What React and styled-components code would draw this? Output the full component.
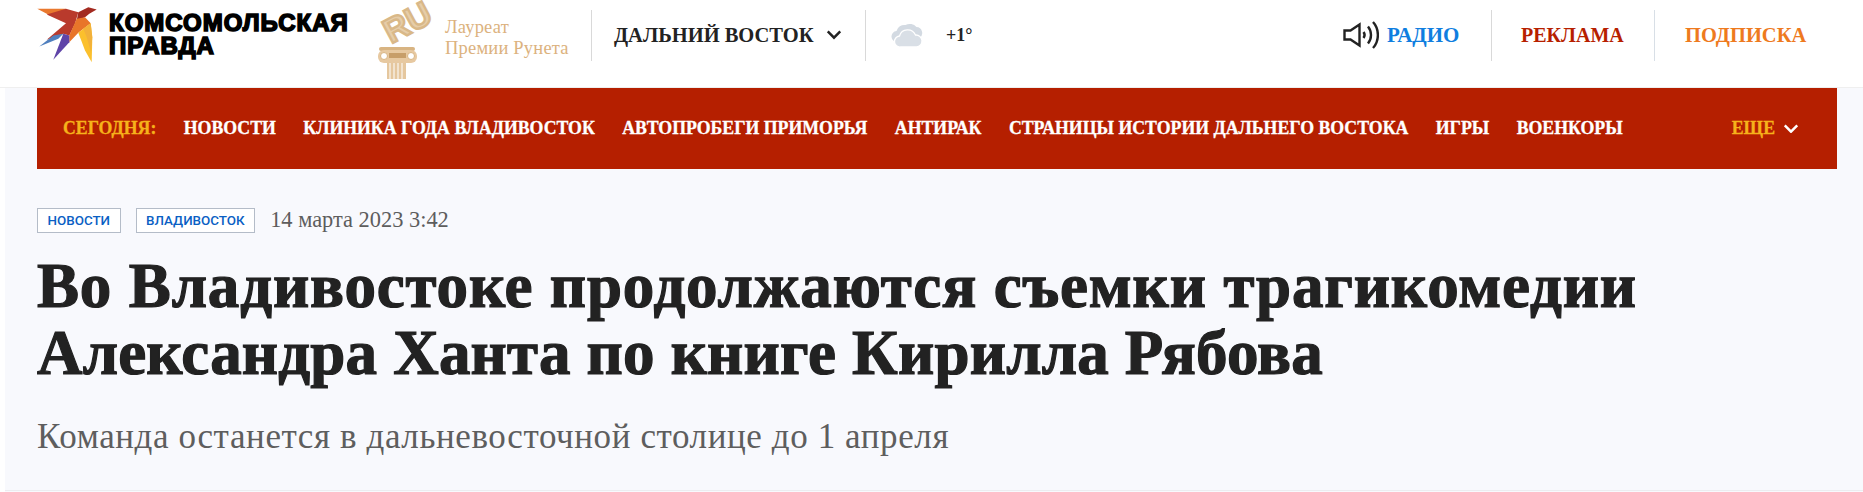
import styled, { createGlobalStyle } from "styled-components";

const navItems = [
  "Новости",
  "Клиника года Владивосток",
  "Автопробеги Приморья",
  "Антирак",
  "Страницы истории Дальнего Востока",
  "Игры",
  "Военкоры",
];

const serif = `"Liberation Serif", "DejaVu Serif", serif`;

const Global = createGlobalStyle`
  html, body {
    margin: 0;
    padding: 0;
    background: #fff;
  }
  * { box-sizing: border-box; }
`;

const Page = styled.div`
  width: 1863px;
  height: 492px;
  overflow: hidden;
  font-family: ${serif};
`;

const Header = styled.header`
  display: flex;
  align-items: flex-start;
  height: 88px;
  padding-left: 37px;
  background: #fff;
  border-bottom: 1px solid #efefef;
`;

const Brand = styled.a`
  flex: none;
  display: flex;
  align-items: flex-start;
  width: 340px;
  padding-top: 7px;
`;

const BrandName = styled.div`
  margin: 5px 0 0 12px;
  font-family: "Liberation Sans", sans-serif;
  font-weight: 700;
  font-size: 24px;
  line-height: 22.5px;
  letter-spacing: 1px;
  color: #000;
  -webkit-text-stroke: 1.6px #000;
  text-transform: uppercase;
  white-space: nowrap;
`;

const Award = styled.div`
  flex: none;
  display: flex;
  align-items: flex-start;
  width: 214px;
`;

const AwardText = styled.div`
  margin: 17px 0 0 12px;
  font-size: 18.5px;
  line-height: 21px;
  letter-spacing: 0.2px;
  color: #dcb27e;
  white-space: nowrap;
`;

const Divider = styled.span`
  flex: none;
  width: 1px;
  height: 51px;
  margin-top: 10px;
  background: ${(p) => p.$color || "#d9d9d9"};
`;

const Region = styled.div`
  flex: none;
  display: flex;
  align-items: center;
  gap: 12px;
  width: 273px;
  height: 70px;
  padding-left: 22px;
  font-size: 20.5px;
  font-weight: 700;
  color: #222;
  text-transform: uppercase;
  white-space: nowrap;
`;

const Weather = styled.div`
  flex: none;
  display: flex;
  align-items: center;
  gap: 22px;
  width: 477px;
  height: 70px;
  padding-left: 25px;
  font-size: 18px;
  font-weight: 700;
  color: #222;
`;

const Radio = styled.div`
  flex: none;
  display: flex;
  align-items: center;
  gap: 8px;
  width: 148px;
  height: 70px;
`;

const HeadLink = styled.a`
  flex: none;
  display: flex;
  align-items: center;
  height: 70px;
  padding-left: ${(p) => p.$pad || 0}px;
  width: ${(p) => p.$w || "auto"};
  font-size: ${(p) => p.$size || 20.5}px;
  font-weight: 700;
  color: ${(p) => p.$color};
  text-transform: uppercase;
  white-space: nowrap;
`;

const Content = styled.div`
  height: 404px;
  margin-left: 5px;
  background: #f8f9fd;
`;

const Nav = styled.nav`
  display: flex;
  align-items: center;
  justify-content: space-between;
  width: 1800px;
  height: 81px;
  margin-left: 32px;
  padding: 0 38px 0 26px;
  background: #b51f00;
`;

const NavList = styled.div`
  display: flex;
  align-items: center;
  gap: 27.4px;
`;

const NavLink = styled.a`
  font-size: 17.8px;
  font-weight: 700;
  color: ${(p) => (p.$accent ? "#f6b21b" : "#fff")};
  -webkit-text-stroke: 0.3px currentColor;
  text-transform: uppercase;
  white-space: nowrap;
`;

const More = styled.div`
  display: flex;
  align-items: center;
  gap: 8px;
`;

const Article = styled.main`
  height: 322px;
  padding: 38px 0 0 32px;
  border-bottom: 1px solid #ececf0;
`;

const Meta = styled.div`
  display: flex;
  align-items: center;
  height: 26px;
`;

const Tag = styled.a`
  display: flex;
  align-items: center;
  height: 25px;
  margin-right: 15px;
  padding: 0 9.5px;
  border: 1px solid #b4bcc8;
  background: #fff;
  font-family: Roboto, sans-serif;
  font-size: 13.4px;
  font-weight: 500;
  color: #0a5fc4;
  text-transform: uppercase;
`;

const DateText = styled.span`
  font-size: 22.4px;
  color: #5d5d5d;
`;

const Title = styled.h1`
  margin: 20px 0 0;
  font-size: 63px;
  line-height: 67px;
  font-weight: 700;
  color: #222;
  -webkit-text-stroke: 1.2px #222;
  white-space: nowrap;
`;

const TitleLine = styled.span`
  display: block;
  letter-spacing: ${(p) => p.$spacing}px;
`;

const Lead = styled.p`
  margin: 30px 0 0;
  font-size: 35px;
  line-height: 40px;
  letter-spacing: 0.6px;
  color: #5e5e5e;
  white-space: nowrap;
`;

const Bird = () => (
  <svg width="60" height="56" viewBox="0 -0.5 60 56">
    <polygon points="0.3,1.3 29,1.3 23,6.3 13,8" fill="#e9782e" />
    <polygon points="9.7,7 29,1.3 41.3,4.7 38,16.3 32.3,28 26.3,26.3 9.7,32.3 29,15.7" fill="#b93a2c" />
    <polygon points="41.3,4.7 51.3,-0.3 59.7,2 52.3,6.3 48,9.7 39.7,13" fill="#a32a20" />
    <polygon points="39.7,11.3 48,9.7 53.7,15.7 41.3,25.3 32.3,34.7 32.3,28" fill="#e8752a" />
    <polygon points="2.3,39 16.3,28 26.3,26.3 21.3,31.3" fill="#4f7fbe" />
    <polygon points="16.3,52.3 26.3,26.3 32.3,28 32.3,34.7" fill="#5f44a8" />
    <polygon points="41.3,25.3 53.7,15.7 55.3,29.7 54.7,54.7 48,43" fill="#fbc02d" />
    <polygon points="46.3,21.3 53.7,15.7 55.3,29.7 54,44.7 49.7,29.7" fill="#f2b13a" />
  </svg>
);

const Column = () => (
  <svg width="56" height="80" viewBox="0 0 56 80">
    <text
      x="14"
      y="44"
      transform="rotate(-28 14 44)"
      fontFamily="Liberation Sans, sans-serif"
      fontWeight="700"
      fontSize="34"
      fill="#e6cda8"
      stroke="#d9b888"
      strokeWidth="2.4"
    >
      RU
    </text>
    <rect x="2" y="47" width="36" height="4" rx="2" fill="#d8b482" />
    <rect x="1" y="50" width="39" height="13" rx="6" fill="#e7c9a1" />
    <circle cx="7" cy="56" r="3.5" fill="#fff" stroke="#d8b482" />
    <circle cx="34" cy="56" r="3.5" fill="#fff" stroke="#d8b482" />
    <rect x="12" y="53" width="17" height="5" fill="#c79e69" />
    <rect x="10" y="63" width="19" height="16" fill="#e5c79e" />
    <path d="M13 63v16M17 63v16M21 63v16M25 63v16" stroke="#fff" strokeWidth="1" />
  </svg>
);

const Chevron = ({ color, size = 16 }) => (
  <svg width={size} height={size * 0.6} viewBox="0 0 16 10">
    <path d="M1.5 1.5 8 8l6.5-6.5" fill="none" stroke={color} strokeWidth="2.6" />
  </svg>
);

const Cloud = () => (
  <svg width="33" height="26" viewBox="0 0 32 26">
    <path fill="#d3dae2" d="M6 20a5.5 5.5 0 0 1-1-11 8 8 0 0 1 9-6 9 9 0 0 1 11 2 6 6 0 0 1 3 11 5 5 0 0 1-4 4z" />
    <path fill="#d9dfe6" stroke="#fff" strokeWidth="1.3" d="M9 25a5.5 5.5 0 0 1-1-11 8.5 8.5 0 0 1 16-1 6 6 0 0 1 1 12z" />
  </svg>
);

const Speaker = () => (
  <svg width="36" height="28" viewBox="0 0 36 28" fill="none" stroke="#222" strokeWidth="2.4">
    <path d="M1.5 9.5h6l9-6v21l-9-6h-6z" />
    <path d="M20.5 11c1.5 2 1.5 4 0 6" />
    <path d="M25 5.500c4 5 4 12 0 17" />
    <path d="M30 1c6.500 7 6.500 19 0 26" />
  </svg>
);

export default function App() {
  return (
    <Page>
      <Global />
      <Header>
        <Brand>
          <Bird />
          <BrandName>
            Комсомольская
            <br />
            правда
          </BrandName>
        </Brand>
        <Award>
          <Column />
          <AwardText>
            Лауреат
            <br />
            Премии Рунета
          </AwardText>
        </Award>
        <Divider />
        <Region>
          Дальний Восток
          <Chevron color="#222" />
        </Region>
        <Divider />
        <Weather>
          <Cloud />
          +1°
        </Weather>
        <Radio>
          <Speaker />
          <HeadLink $color="#0f7ee0" $size={21}>
            Радио
          </HeadLink>
        </Radio>
        <Divider />
        <HeadLink $color="#b71f00" $pad={29} $size={20} $w="162px">
          Реклама
        </HeadLink>
        <Divider $color="#d8dfe6" />
        <HeadLink $color="#ee7a1e" $pad={30}>
          Подписка
        </HeadLink>
      </Header>
      <Content>
        <Nav>
          <NavList>
            <NavLink $accent>Сегодня:</NavLink>
            {navItems.map((item) => (
              <NavLink key={item}>{item}</NavLink>
            ))}
          </NavList>
          <More>
            <NavLink $accent>Еще</NavLink>
            <Chevron color="#fff" />
          </More>
        </Nav>
        <Article>
          <Meta>
            <Tag>Новости</Tag>
            <Tag>Владивосток</Tag>
            <DateText>14 марта 2023 3:42</DateText>
          </Meta>
          <Title>
            <TitleLine $spacing={0.84}>Во Владивостоке продолжаются съемки трагикомедии</TitleLine>
            <TitleLine $spacing={0.18}>Александра Ханта по книге Кирилла Рябова</TitleLine>
          </Title>
          <Lead>Команда останется в дальневосточной столице до 1 апреля</Lead>
        </Article>
      </Content>
    </Page>
  );
}
